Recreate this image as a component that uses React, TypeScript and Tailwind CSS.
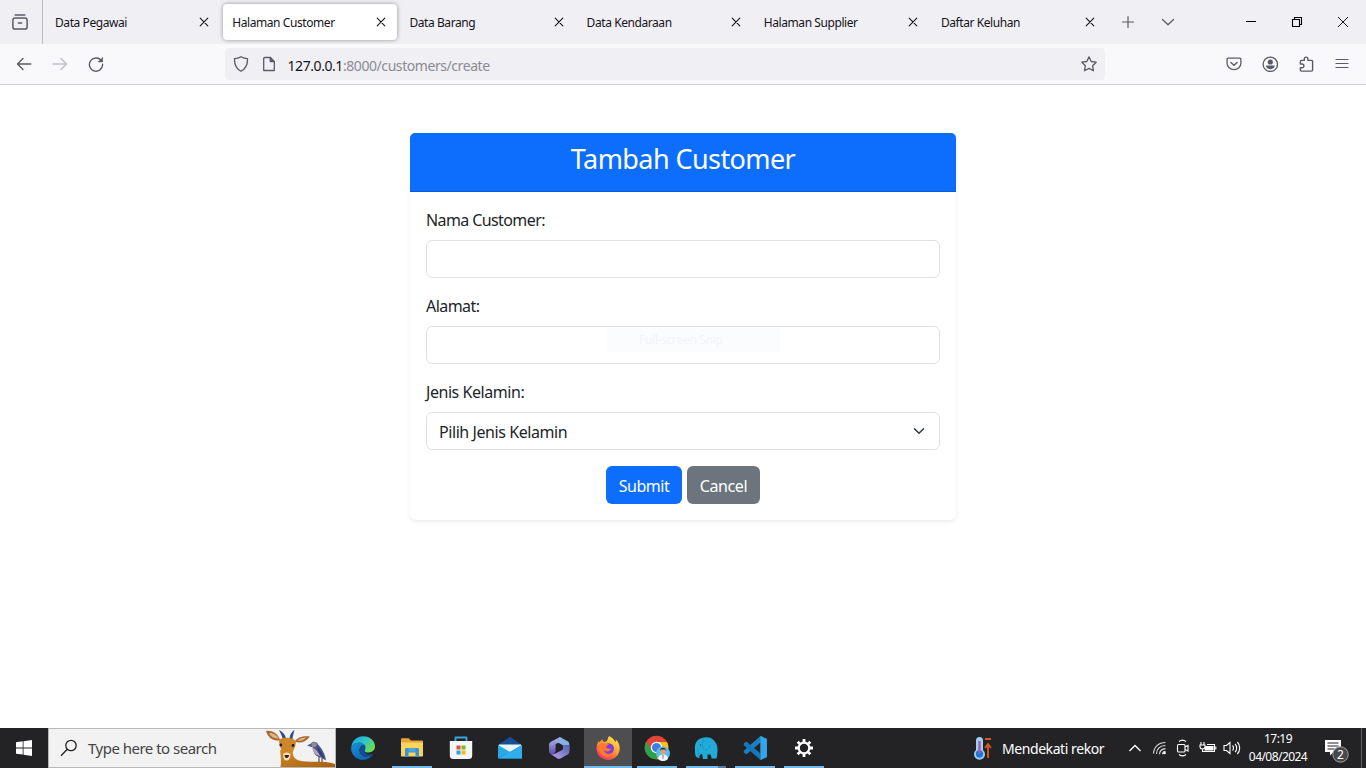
import React from "react";

type IconProps = { className?: string };

const tabs = [
  { title: "Data Pegawai", active: false },
  { title: "Halaman Customer", active: true },
  { title: "Data Barang", active: false },
  { title: "Data Kendaraan", active: false },
  { title: "Halaman Supplier", active: false },
  { title: "Daftar Keluhan", active: false },
];

function Line({ children, className = "" }: { children: React.ReactNode; className?: string }) {
  return (
    <svg viewBox="0 0 16 16" fill="none" stroke="currentColor" strokeWidth="1.2" strokeLinecap="round" strokeLinejoin="round" className={`size-4 shrink-0 ${className}`}>
      {children}
    </svg>
  );
}

const CloseIcon = ({ className = "" }: IconProps) => (
  <Line className={className}><path d="M4.2 4.2l7.6 7.6M11.8 4.2l-7.6 7.6" strokeWidth="1.1" /></Line>
);

function TabBar() {
  return (
    <div className="flex h-11 bg-[#f0eff4] text-[#15141a]">
      <div className="flex w-[43px] shrink-0 items-center justify-center border-r border-[#bdbcc2] pr-[2px] text-[#5b5b66]">
        <svg viewBox="0 0 16 16" fill="none" stroke="currentColor" strokeWidth="1.500" strokeLinecap="round" className="size-4">
          <path d="M3.200 1.100h9.600" />
          <rect x=".9" y="4" width="14.200" height="11.100" rx="2.200" />
          <path d="M6.400 9h3.200" />
        </svg>
      </div>
      <div className="flex w-[1065px] shrink-0 pl-[1.500px]">
        {tabs.map((t) => (
          <div key={t.title} className="w-[177.200px] shrink-0 px-[1.500px] pt-[4px]">
            <div className={t.active ? "flex h-9 items-center justify-between rounded bg-white pr-2 pl-[9px] shadow-[0_0_4px_rgba(0,0,0,0.4)]" : "flex h-9 items-center justify-between pr-2 pl-[9px]"}>
              <span className="pt-[2px] text-[12px] tracking-[-0.42px] whitespace-nowrap">{t.title}</span>
              <CloseIcon />
            </div>
          </div>
        ))}
      </div>
      <div className="flex shrink-0 items-center gap-6 pl-3 text-[#5b5b66]">
        <Line><path d="M8 2.500v11M2.500 8h11" /></Line>
        <Line><path d="M2.500 5.500L8 10.800l5.500-5.300" /></Line>
      </div>
      <div className="ml-auto flex w-[138px] text-black">
        <div className="flex flex-1 items-center justify-center">
          <svg viewBox="0 0 12 12" className="size-3" stroke="currentColor"><path d="M1 5.500h10" /></svg>
        </div>
        <div className="flex flex-1 items-center justify-center">
          <svg viewBox="0 0 12 12" className="size-3" fill="none" stroke="currentColor" strokeWidth="1.100"><path d="M1.500 3.500h7v7h-7zM3.500 3.500v-2h7v7h-2" /></svg>
        </div>
        <div className="flex flex-1 items-center justify-center">
          <svg viewBox="0 0 12 12" className="size-3" stroke="currentColor" strokeWidth=".9"><path d="M1 1l10 10M11 1L1 11" /></svg>
        </div>
      </div>
    </div>
  );
}

function Toolbar() {
  return (
    <div className="flex h-[41px] items-center border-b border-[#cccccc] bg-[#f9f9fb] text-[#5b5b66]">
      <div className="flex w-[225px] shrink-0 gap-5 pl-4">
        <Line><path d="M14.800 8H1.500M7 2.500L1.500 8 7 13.500" strokeWidth="1.400" /></Line>
        <Line className="text-[#bfbfc5]"><path d="M1.200 8h13.300M9 2.500L14.500 8 9 13.500" strokeWidth="1.400" /></Line>
        <Line>
          <path d="M13.700 5.200A6.600 6.600 0 1 0 14.600 8.300" strokeWidth="1.400" />
          <path d="M14.600 1.700v4.200h-4.200z" fill="currentColor" strokeWidth=".6" />
        </Line>
      </div>
      <div className="flex h-8 w-[880px] shrink-0 items-center rounded bg-[#f0eff4] px-2">
        <Line><path d="M8 .7c2 1.200 4.500 1.900 6.500 2 .2 5.500-1.700 10-6.500 12.600C3.200 12.700 1.300 8.200 1.500 2.700 3.500 2.600 6 1.900 8 .7z" strokeWidth="1.300" /></Line>
        <Line className="ml-3">
          <path d="M3.800 1.500h5.400L13.300 5.600v8.900H2.700V2.600a1.100 1.100 0 0 1 1.100-1.100z" strokeWidth="1.300" />
          <path d="M9.200 1.500v4.100h4.100z" fill="currentColor" />
        </Line>
        <span className="ml-[10.500px] pt-[2px] text-[14px] tracking-[-0.430px] whitespace-nowrap text-[#8b8a92]">
          <span className="text-[#15141a]">127.0.0.1</span>:8000/customers/create
        </span>
        <Line className="ml-auto"><path d="M8 .9l2.200 4.600 5 .7-3.600 3.500.9 5.100L8 12.400l-4.500 2.400.9-5.100L.8 6.200l5-.7z" strokeWidth="1.300" /></Line>
      </div>
      <div className="ml-auto flex gap-5 pr-4">
        <Line>
          <path d="M2.200 2.200h11.600c.7 0 1.100.5 1.100 1.100v4a6.900 6.400 0 0 1-13.800 0v-4c0-.6.4-1.100 1.100-1.100z" strokeWidth="1.300" />
          <path d="M4.900 6.400L8 9.300l3.100-2.900" strokeWidth="1.400" />
        </Line>
        <Line>
          <circle cx="8.300" cy="8.300" r="7.200" strokeWidth="1.300" />
          <circle cx="8.300" cy="6" r="2.600" fill="currentColor" stroke="none" />
          <path d="M4 9.600h8.600c0 2.200-1.700 3.600-4.300 3.600S4 11.800 4 9.600z" fill="currentColor" stroke="none" />
        </Line>
        <Line><path d="M2.400 5.400c0-.6.4-1 1-1h2.900V2.900a1.800 1.800 0 0 1 3.600 0v1.500h3.700c.6 0 1 .4 1 1v8.700c0 .6-.4 1-1 1H3.400c-.6 0-1-.4-1-1v-2.300H4A1.900 1.900 0 0 0 4 8H2.400z" strokeWidth="1.400" /></Line>
        <Line><path d="M2 3.500h12M2 7.500h12M2 11.500h12" strokeWidth="1.200" /></Line>
      </div>
    </div>
  );
}

function CustomerForm() {
  return (
    <main className="flex-1 bg-white pt-12">
      <section className="mx-auto h-[387px] w-[546px] rounded-md bg-white text-[#212529] shadow-[0_2px_4px_rgba(0,0,0,0.075)]">
        <header className="flex h-[59px] justify-center rounded-t-[5px] border-b border-[#0b5cd5] bg-[#0d6efd] pt-2">
          <h3 className="h-[34px] text-[27px] leading-[36px] tracking-[-0.580px] whitespace-nowrap text-white">Tambah Customer</h3>
        </header>
        <form className="flex flex-col p-4" onSubmit={(e) => e.preventDefault()}>
          <label htmlFor="nama" className="mb-2 h-6 text-[16px] leading-[25px] tracking-[-0.600px]">Nama Customer:</label>
          <input id="nama" className="mb-4 h-[38px] rounded-md border border-[#dee2e6] px-3 outline-none" />
          <label htmlFor="alamat" className="mb-2 h-6 text-[16px] leading-[25px] tracking-[-0.550px]">Alamat:</label>
          <div className="relative mb-4 flex">
            <input id="alamat" className="h-[38px] w-full rounded-md border border-[#dee2e6] px-3 outline-none" />
            <span className="pointer-events-none absolute top-[2px] left-[181px] flex h-6 w-[173px] items-center bg-[#fbfcfe] pl-8 text-[12px] tracking-[-0.300px] text-[#f3f4f7]">Full-screen Snip</span>
          </div>
          <label className="mb-2 h-6 text-[16px] leading-[25px] tracking-[-0.450px]">Jenis Kelamin:</label>
          <button type="button" className="mb-4 flex h-[38px] items-center justify-between rounded-md border border-[#dee2e6] pr-3 pl-3 text-[16px] tracking-[-0.430px]">
            <span className="pt-px whitespace-nowrap">Pilih Jenis Kelamin</span>
            <svg viewBox="0 0 16 16" fill="none" stroke="#343a40" strokeWidth="2" strokeLinecap="round" strokeLinejoin="round" className="size-4 p-[2px]"><path d="M2 5l6 6 6-6" /></svg>
          </button>
          <div className="flex justify-center gap-[5px] text-[16px] text-white">
            <button className="h-[38px] w-[76px] rounded-md bg-[#0d6efd] pt-px tracking-[-0.500px]">Submit</button>
            <button type="button" className="h-[38px] w-[73px] rounded-md bg-[#6c757d] pt-px tracking-[-0.400px]">Cancel</button>
          </div>
        </form>
      </section>
    </main>
  );
}

const Deer = () => (
  <svg viewBox="0 0 70 38" className="h-[38px] w-[70px]">
    <defs>
      <linearGradient id="deer" x1="0" y1="0" x2="1" y2="1"><stop offset="0" stopColor="#d28a28" /><stop offset="1" stopColor="#a55f11" /></linearGradient>
    </defs>
    <path d="M15.500 38c1-6 0-11-.3-17L27 21c1 6 2 9 7 10.500C44 34 58 31 70 35v3z" fill="url(#deer)" />
    <path d="M1 2c5-1 12 2 14 9-6 2-12-2-14-9z" fill="#a9682d" /><path d="M4 4c4 0 8 2 9.500 5.500C9 9.500 6 8 4 4z" fill="#dfb48a" />
    <path d="M45 7.500c-5-1-13 0-15 5 5 2.500 11 .5 15-5z" fill="#a9682d" /><path d="M41 8.500c-3 0-7 1-8.500 3.500 3 .5 7-1 8.500-3.500z" fill="#dfb48a" />
    <path d="M18 11c-1-4-2-6-4-10 4 2 7 5 7 10zM24.500 11c0-5 2-8 5-10-1 4-2 6-2 10z" fill="#344a86" />
    <path d="M14 11c4-3 12-3 17 1 0 6-3 9-5 16-1 4-7 4-8 0-.5-6-4-11-4-17z" fill="#cf8529" />
    <path d="M18 25c3-2 5-2 7.500 0-.5 4-1 6.500-4 6.500S18.500 28 18 25z" fill="#f3dfc0" /><path d="M19.500 26H24c0 2-1 3-2.300 3s-2.200-1-2.200-3z" fill="#382015" />
    <circle cx="15.800" cy="16" r="1.400" fill="#291b17" /><circle cx="28" cy="16.500" r="1.400" fill="#291b17" />
    <path d="M42 16.500l4-2c1-2.500 6-2.500 7 1 4 4 7 9 8 16l-5-3c-6-1-8-5-8-10z" fill="#4a5687" />
    <path d="M47 18c4 2 6 5 8 9-5-1-7-4-8-9z" fill="#b5a9ad" /><path d="M52 17.500c4 4 6 8 7.500 13L54 24z" fill="#2c3c83" />
    <circle cx="49" cy="15.500" r="2.600" fill="#89909c" /><path d="M54 28v5M57 29v4" stroke="#382c2c" />
  </svg>
);

const Edge = () => (
  <svg viewBox="0 0 24 24" className="size-6">
    <defs>
      <linearGradient id="edgeA" x1="0" y1="0" x2="1" y2=".6"><stop offset="0" stopColor="#1b9de2" /><stop offset=".5" stopColor="#2bc3d2" /><stop offset="1" stopColor="#6bdd50" /></linearGradient>
      <linearGradient id="edgeB" x1="0" y1="0" x2="1" y2="1"><stop offset="0" stopColor="#1593de" /><stop offset="1" stopColor="#1057a4" /></linearGradient>
    </defs>
    <path d="M.3 11C1 4.500 6 .3 12.200.3 19 .3 24 5 24 10.300c0 4-3 6.200-6.400 6.200-2.800 0-4.200-1-4.200-1.800 0-.7.9-1.100.9-3 0-2.500-2.300-5-6-5C4 6.700 1.200 8.700.3 11z" fill="url(#edgeA)" />
    <path d="M.2 11.500C1 8.500 4.500 6.500 8.300 6.500c3.200 0 5 1.400 5.700 3-2-.7-5.500 1-5.500 5 0 4 4 6.500 8 6 2.500-.3 4-1 5.500-2.200C20 21.800 16.200 24 12 24 5 24-.5 18 .2 11.500z" fill="url(#edgeB)" />
    <path d="M14 9.500c-3-.6-5.700 2-5.500 5 .2 4 4.200 6.600 8 6.100 2.500-.3 4.500-1.300 5.800-3.100-4 2.200-8.900.2-8.900-2.800 0-.8.9-1.200.9-2.800 0-1-.1-1.700-.3-2.400z" fill="#124d91" />
  </svg>
);

const Explorer = () => (
  <svg viewBox="0 0 24 24" className="size-6">
    <path d="M1 3.500c0-.8.5-1.200 1.200-1.200h6.500L11 4.500h10.800c.7 0 1.200.4 1.200 1.100V10H1z" fill="#e6a52e" />
    <path d="M1 6.500h22v13c0 .7-.5 1-1 1H2c-.6 0-1-.4-1-1z" fill="#fbd45f" />
    <path d="M5 21v-7.500c0-.8.600-1.500 1.500-1.500h11c.9 0 1.500.7 1.500 1.500V21h-3.500v-4.500h-7V21z" fill="#3e92cc" />
    <path d="M8.500 12h7v3.500h-7z" fill="#4fa7dc" />
  </svg>
);

const Store = () => (
  <svg viewBox="0 0 24 24" className="size-6">
    <path d="M6.500 6V1.500h11V6" fill="none" stroke="#38a5df" strokeWidth="1.800" strokeLinejoin="round" />
    <path d="M.8 5h22.400v14.500a3.500 3.500 0 0 1-3.500 3.500H4.300a3.500 3.500 0 0 1-3.500-3.500z" fill="#f3f5f6" />
    <path d="M7.500 9.500h4v4h-4z" fill="#e64e2e" /><path d="M12.500 9.500h4v4h-4z" fill="#76b82a" />
    <path d="M7.500 14.500h4v4h-4z" fill="#28a4e1" /><path d="M12.500 14.500h4v4h-4z" fill="#f7b718" />
  </svg>
);

const Mail = () => (
  <svg viewBox="0 0 24 24" className="size-6">
    <path d="M0 9L12 .8 24 9v3H0z" fill="#174e96" /><path d="M1 8.500h22V18H1z" fill="#e9f5fb" />
    <path d="M0 9l12 7-12 6.500z" fill="#2ba7e4" /><path d="M24 9v13.500H0z" fill="#1c8ad4" />
    <path d="M0 22.500L24 9v13.500z" fill="#2fadec" />
  </svg>
);

const Office = () => (
  <svg viewBox="0 0 24 24" className="size-6">
    <defs>
      <linearGradient id="offA" x1="0" y1="0" x2="0" y2="1"><stop offset="0" stopColor="#b9b6ee" /><stop offset="1" stopColor="#5a4fb0" /></linearGradient>
      <linearGradient id="offB" x1="1" y1="0" x2="0" y2="1"><stop offset="0" stopColor="#4c62b4" /><stop offset="1" stopColor="#c5a3ee" /></linearGradient>
    </defs>
    <path d="M13 1L4 5.800C2.500 6.600 2 7.500 2 9v6c0 2 1 3.300 3 3.300 2.500 0 3.500-1.300 3.500-3.300V9.500c0-1 .3-1.500 1.200-2L14 5z" fill="url(#offA)" />
    <path d="M13 1l8 4.500c1 .6 1.300 1.500 1.300 3V15l-6-2.500V9.500L9.500 6z" fill="#86b0e4" />
    <path d="M22.300 9v6.500c0 1.500-.5 2.300-1.600 3L13.500 22.500c-1 .6-2 .6-3 0L4 18.300c3 .2 4-.3 5.500-1.300l5.300-3c1-.5 1.500-1 1.500-2.500V9z" fill="url(#offB)" />
    <path d="M9.200 9.700l3.300-2.200 3.300 2.200v3.600L12.500 15.200l-3.300-1.700z" fill="#202227" />
  </svg>
);

const Firefox = () => (
  <svg viewBox="0 0 24 24" className="size-6">
    <defs><linearGradient id="fox" x1=".8" y1="0" x2=".2" y2="1"><stop offset="0" stopColor="#fff04d" /><stop offset=".45" stopColor="#ff9e2c" /><stop offset="1" stopColor="#f42862" /></linearGradient></defs>
    <path d="M13 0c4 1.800 5.500 4 6.200 6 1-.4.8-1.700.5-2.500 3 2.500 4 6 4 9C23.700 18.800 18.500 24 12 24S.5 19 .5 12.500C.5 9.200 1.700 6.500 3 4.500c0 1 .2 1.500.5 2 .8-1.500 1.700-2.500 3-3.300-.1 1.200.3 2 1 2.600h2.300C12 4.500 11.500 2.500 13 0z" fill="url(#fox)" />
    <circle cx="12.700" cy="12.500" r="5.300" fill="#7b3de0" />
    <path d="M3.500 8c2-1.500 4.500-1.500 6.200-.2l3 .3c.2 1.300-2.700 1.800-2.700 3 .8 2 3.500 1.300 5 2-1 3-5.500 3-7.500 1 1 4 6 5.500 9.500 3-2 5-9.500 5-12.500.5C3 15 2.500 11 3.500 8z" fill="#ff7a30" />
    <path d="M12.500 3c4 1 6.500 4 6.200 8-1-2.500-3-3.800-5.700-4.500z" fill="#ffc83a" />
  </svg>
);

const Chrome = () => (
  <svg viewBox="0 0 27 26" className="h-[26px] w-[27px]">
    <circle cx="12.500" cy="12.500" r="11.800" fill="#e24537" />
    <path d="M2.300 6.600A11.800 11.800 0 0 0 12.500 24.300l5-9-5 3-5-2.800z" fill="#2ba24c" />
    <path d="M12.500 7H23A11.800 11.800 0 0 1 12.500 24.300L18 14.800z" fill="#fbc116" />
    <circle cx="12.500" cy="12.500" r="5.700" fill="#fff" /><circle cx="12.500" cy="12.500" r="4.500" fill="#397fe8" />
    <circle cx="19" cy="18.500" r="7" fill="#5bbbe8" />
    <path d="M14 24c.5-3.500 2-4.500 5-4.500s4.500 1 5 4.500a7 7 0 0 1-10 0z" fill="#f2f6f8" />
    <path d="M18.500 20h1l-.2 4h-.6z" fill="#3d657f" />
    <circle cx="19" cy="16.300" r="2.900" fill="#d9a27e" /><path d="M16 16c-.3-4.500 6.300-4.500 6 0l-1-1.500h-4z" fill="#202832" />
  </svg>
);

const Elephant = () => (
  <svg viewBox="0 0 24 24" className="size-6">
    <path d="M1 14C0 7 4 2 10 1.500c6-1.500 11 2 13 8 1 4 .5 9-.5 13h-4.800l-1-4h-3.200v4.500H9l-1-5.500-2.500 2v2.500C1 22 1 18 1 14z" fill="#22abd9" />
    <path d="M10 2c-2.500 4-2 10 1 12.500 3-.5 5-3 5.500-6M5.500 19.500c-1.500-2-2-4-1.500-6" fill="none" stroke="#1793c2" strokeWidth=".8" />
    <circle cx="6.500" cy="9" r=".7" fill="#0c536f" />
  </svg>
);

const Code = () => (
  <svg viewBox="0 0 24 24" className="size-6">
    <path d="M17.500 0L24 3v18l-6.500 3V6.500L3.500 18.200.8 16.700v-2z" fill="#1c7fc5" />
    <path d="M.8 7.300L3.500 5.500l14 12V24L.8 9.300z" fill="#1677ba" /><path d="M17.500 0L24 3v18l-6.500 3z" fill="#35a5e9" />
  </svg>
);

const Gear = () => (
  <svg viewBox="0 0 20 20" className="size-5" fill="none" stroke="#fff">
    <circle cx="10" cy="10" r="5.300" strokeWidth="2.200" />
    <path d="M10 1v3M10 16v3M1 10h3M16 10h3M3.640 3.640l2.100 2.100M14.260 14.260l2.100 2.100M3.640 16.360l2.100-2.100M14.260 5.740l2.100-2.100" strokeWidth="2.800" />
  </svg>
);

const apps = [
  { name: "Edge", icon: <Edge />, cell: "", bar: "" },
  { name: "Explorer", icon: <Explorer />, cell: "", bar: "w-10 bg-[#76b9ed]" },
  { name: "Store", icon: <Store />, cell: "", bar: "" },
  { name: "Mail", icon: <Mail />, cell: "", bar: "" },
  { name: "Office", icon: <Office />, cell: "", bar: "" },
  { name: "Firefox", icon: <Firefox />, cell: "bg-[#4e4e50]", bar: "w-12 bg-[#76b9ed]" },
  { name: "Chrome", icon: <Chrome />, cell: "", bar: "w-10 bg-[#76b9ed]" },
  { name: "Elephant", icon: <Elephant />, cell: "", bar: "w-10 border-r-8 border-[#557f9f] bg-[#76b9ed]" },
  { name: "Code", icon: <Code />, cell: "", bar: "w-10 bg-[#76b9ed]" },
  { name: "Settings", icon: <Gear />, cell: "", bar: "w-10 bg-[#76b9ed]" },
];

function Tray() {
  return (
    <div className="ml-auto flex items-center text-white">
      <svg viewBox="0 0 20 24" className="h-6 w-5">
        <path d="M3 4.500a3.500 3.500 0 0 1 7 0V14a5.500 5.500 0 1 1-7 0z" fill="#9dd0f5" />
        <circle cx="6.500" cy="18" r="3.700" fill="#2475d0" /><path d="M5.300 5h2.400v12H5.300z" fill="#a95aa9" />
        <path d="M12 3h6M15 22V9M12 12l3-4 3 4" stroke="#d95620" strokeWidth="1.900" fill="none" />
      </svg>
      <span className="ml-[9px] w-[102px] text-[14px] tracking-[-0.430px] whitespace-nowrap">Mendekati rekor</span>
      <svg viewBox="0 0 14 14" className="ml-6 size-[14px]" fill="none" stroke="#fff" strokeWidth="1.300"><path d="M1.500 10L7 4.500l5.500 5.500" /></svg>
      <svg viewBox="0 0 16 16" className="ml-[10px] size-4" fill="none" stroke="#ddd" strokeWidth="1.100">
        <path d="M1.500 13.500C1.800 7 6.500 2.500 13.500 2.500M4.500 14C4.700 9 8 5.700 13.500 5.500M7.500 14.200c.2-3.400 2.500-5.400 6-5.600" /><path d="M10.500 14.200c.1-1.700 1.200-2.700 3-2.800" /><circle cx="12.500" cy="13" r="1.300" fill="#fff" stroke="none" />
      </svg>
      <svg viewBox="0 0 16 18" className="ml-[7px] h-[18px] w-4" fill="none" stroke="#fff" strokeWidth="1.100">
        <path d="M4 2.500c2-1.600 5-1.600 7 0M4 15.500c2 1.600 5 1.600 7 0" /><rect x="2.500" y="5.500" width="7.500" height="7.500" rx="1" /><path d="M10 8l3-1.500V12l-3-1.500" />
      </svg>
      <svg viewBox="0 0 18 16" className="ml-2 h-4 w-[18px]" fill="none" stroke="#fff" strokeWidth="1.100">
        <path d="M2 2v3M5 2v3M1 5h5v1.500a2.500 2.500 0 0 1-5 0zM3.500 9v2.500H6M8 4.500h7.500v7h-11" /><path d="M7 6.500h7v3.500H6z" fill="#fff" /><path d="M16.800 6.500v3" />
      </svg>
      <svg viewBox="0 0 18 16" className="ml-[6px] h-4 w-[18px]" fill="none" stroke="#fff" strokeWidth="1.100">
        <path d="M1 5.500h2.500L7 2.500v11l-3.500-3H1zM9.500 5.500c1.300 1.300 1.300 3.700 0 5M12 3.800c2.200 2.200 2.200 6.200 0 8.400M14.300 2c3.200 3.200 3.200 8.800 0 12" />
      </svg>
      <div className="mr-px ml-[7px] w-[60px] text-center text-[12px] leading-[18px] tracking-[-0.550px] whitespace-nowrap">
        <div>17:19</div>
        <div>04/08/2024</div>
      </div>
      <svg viewBox="0 0 26 26" className="mt-[6px] ml-[15px] size-[26px]">
        <path d="M1 2h16v12H9.500L6 17.500V14H1z" fill="#fff" /><path d="M3.500 5h11M3.500 8h11M3.500 11h7" stroke="#242426" strokeWidth="1.200" />
        <circle cx="16.500" cy="16.500" r="7.700" fill="#48484a" stroke="#a1a1a3" strokeWidth="1" />
        <text x="16.500" y="20.700" textAnchor="middle" fontSize="12" fill="#fff">2</text>
      </svg>
      <div className="ml-[11px] h-10 w-[5px] border-l border-[#626264]" />
    </div>
  );
}

function Taskbar() {
  return (
    <footer className="flex h-10 shrink-0 bg-[#232325]">
      <button className="flex w-12 items-center justify-center">
        <svg viewBox="0 0 16 16" className="size-4" fill="#fff"><path d="M0 2.300l6.700-1v6.200H0zM7.500 1.200L16 0v7.500H7.500zM0 8.400h6.700v6.200L0 13.700zM7.500 8.400H16V16l-8.500-1.200z" /></svg>
      </button>
      <div className="flex w-72 items-center border border-[#b8b8b8] bg-[#f2f2f2] pl-[11px] text-[#444]">
        <svg viewBox="0 0 18 18" className="size-[18px]" fill="none" stroke="#222" strokeWidth="1.300"><circle cx="11" cy="6.500" r="5.200" /><path d="M7.300 10.200L1 16.700" /></svg>
        <span className="ml-[10px] text-[15px] tracking-[-0.510px] whitespace-nowrap">Type here to search</span>
        <div className="ml-auto"><Deer /></div>
      </div>
      <div className="ml-[3px] flex gap-px">
        {apps.map((a) => (
          <div key={a.name} className={`flex h-10 w-12 flex-col items-center ${a.cell}`}>
            <div className="flex h-[38px] items-center justify-center pt-[2px]">{a.icon}</div>
            <div className={`h-[2px] ${a.bar}`} />
          </div>
        ))}
      </div>
      <Tray />
    </footer>
  );
}

export default function App() {
  return (
    <div className="flex h-[768px] w-[1366px] flex-col overflow-hidden bg-white font-['Noto_Sans','Open_Sans',sans-serif]">
      <TabBar />
      <Toolbar />
      <CustomerForm />
      <Taskbar />
    </div>
  );
}
